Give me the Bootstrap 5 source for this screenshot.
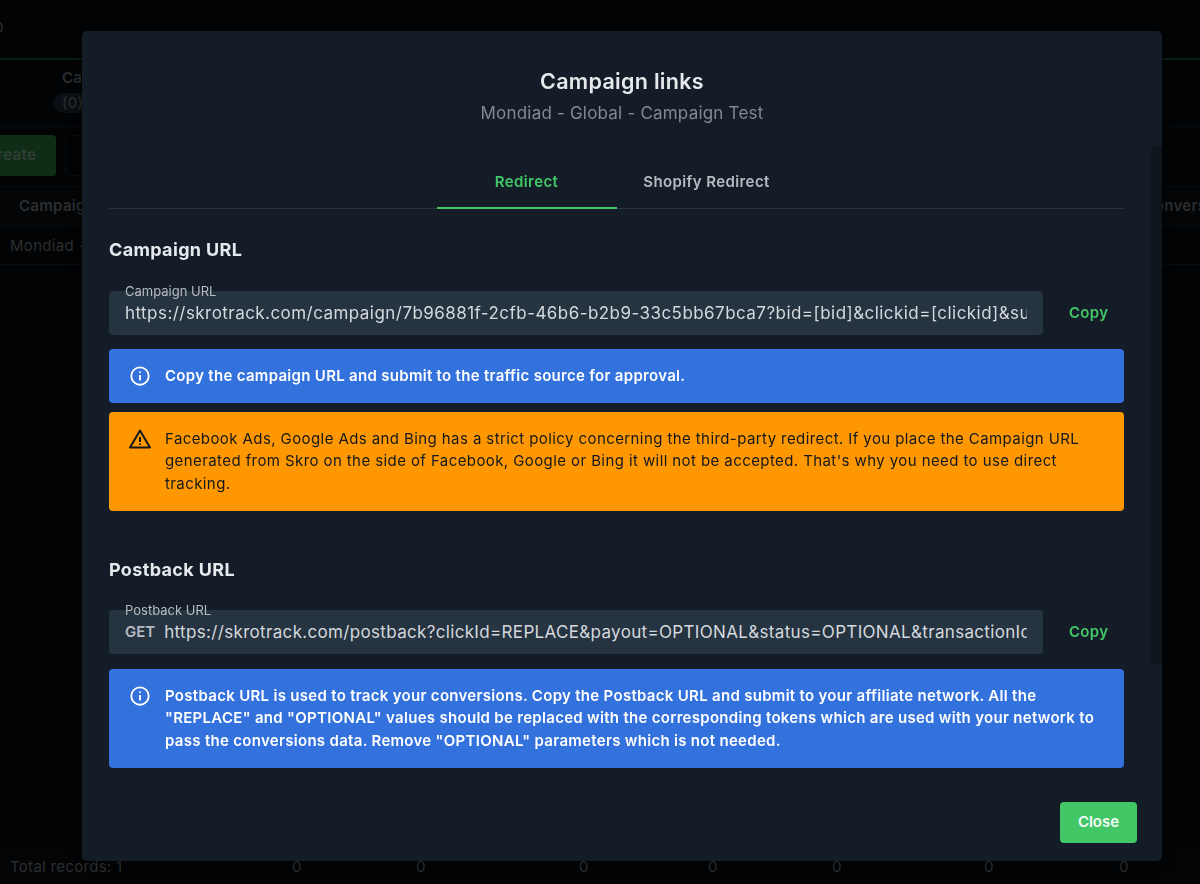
<!DOCTYPE html>
<html lang="en">
<head>
<meta charset="utf-8">
<title>Campaign links</title>
<link rel="stylesheet" href="https://cdn.jsdelivr.net/npm/bootstrap@5.3.0/dist/css/bootstrap.min.css">
<style>
html,body{height:884px;overflow:hidden;background:#020304}
body{font-family:"Inter","Noto Sans",sans-serif;color:#e5e9ec;font-size:15px;letter-spacing:.3px}
.bg-page{height:884px;width:1200px;color:#2c2f31;overflow:hidden;display:flex;flex-direction:column;background:#020304}
.bg-top{height:60px;border-bottom:2px solid #07200d;padding:17px 0 0;margin-left:-6px;font-size:15px}
.bg-tabs{height:67px;padding:7px 0 0 53px;border-bottom:1px solid #080b0e;font-size:15px;font-weight:600}
.bg-tabs .tab-name{padding-left:9px;white-space:nowrap}
.bg-pill{display:inline-block;background:#0a0f13;border-radius:10px;padding:0 9px;font-weight:400;width:60px;line-height:20px;margin-top:3px}
.bg-tools{height:60px;padding-top:8px;display:flex;gap:9px;border-bottom:1px solid #080b0e}
.bg-create{width:90px;margin-left:-34px;height:41px;background:#0f2c17;border-radius:4px;color:#303f34;font-weight:600;text-align:center;padding:9px 0 0;white-space:nowrap}
.bg-ghost{width:80px;height:41px;border:1px solid #090c0e;border-radius:4px}
.bg-head{height:39px;display:flex;justify-content:space-between;align-items:center;padding:0 0 0 19px;font-weight:600;background:#040506;border-bottom:1px solid #080b0e;white-space:nowrap}
.bg-head .conv{margin-right:-38px}
.bg-row{height:39px;padding:9px 0 0 10px;border-bottom:1px solid #080b0e}
.bg-fill{flex:1}
.bg-foot{height:38px;display:flex;align-items:center;position:relative;padding:4px 0 0 10px;background:#030405}
.bg-foot span.zero{position:absolute;top:10px}
.backdrop-pane{position:fixed;inset:0;z-index:1050;overflow:hidden}
.links-dialog{position:absolute;left:82px;top:31px;width:1080px;height:830px;background:#141d27;border-radius:5px;box-shadow:0 0 12px rgba(0,0,0,.5)}
.rail{position:absolute;right:0;top:114px;width:11px;height:520px;background:#0e161c;border-radius:6px}
.links-body{padding:36px 38px 0 27px;height:100%;display:flex;flex-direction:column}
.links-title{font-size:21.5px;font-weight:600;text-align:center;color:#e5e9ec;line-height:28px;margin:0 -11px 0 0;letter-spacing:.3px}
.links-sub{font-size:17px;text-align:center;color:#808a95;line-height:24px;margin:6px -11px 0 0;letter-spacing:.2px}
.links-tabs{display:flex;justify-content:center;border-bottom:1px solid #2a343d;margin-top:34px;height:50px;margin-bottom:0;list-style:none;padding:0}
.links-tabs li{width:180px;text-align:center;font-size:15px;font-weight:600;color:#b6bcc1;padding-top:12px;letter-spacing:.4px}
.links-tabs li.on{color:#42c767;border-bottom:2px solid #42c767;height:50px}
.links-h{font-size:18px;font-weight:700;color:#e5e9ec;line-height:24px;margin:29px 0 0;letter-spacing:.35px}
.links-h2{margin-top:47px}
.url-row{display:flex;align-items:center;margin-top:29px}
.url-row-tight{margin-top:28px}
.url-box{position:relative;width:934px;height:44px;background:#263341;border-radius:4px;padding:12px 16px 0;font-size:17px;line-height:20px;color:#d4d9dd;white-space:nowrap;display:flex;flex-shrink:0;letter-spacing:.45px}
.url-clip{overflow:hidden;flex:1;min-width:0}
.url-wide{letter-spacing:.33px}
.url-float{position:absolute;left:16px;top:-8px;font-size:13px;line-height:16px;color:#b6bcc1;z-index:2;letter-spacing:0}
.get{font-weight:600;font-size:15px;color:#b6bcc1;margin-right:9px;letter-spacing:0}
.url-copy{margin-left:26px;color:#42c767;font-weight:600;font-size:15px}
.note{display:flex;border-radius:4px;padding:15.75px 20px;font-size:15px;line-height:22.5px;gap:14px;letter-spacing:.41px}
.note svg{flex-shrink:0}
.note-blue{background:#3371dc;color:#fff;font-weight:600;margin-top:14px;letter-spacing:.3px}
.note-gap{margin-top:15px}
.note-warn{background:#ff9800;color:#14181c;margin-top:9px}
.note-warn svg{margin:-1px -1px 0}
.close-wrap{position:absolute;right:25px;bottom:18px}
.btn-closer{background:#42c767;border:0;color:#f4fbf6;font-weight:600;font-size:15px;width:77px;height:41px;border-radius:4px;padding:0}
</style>
</head>
<body>
<div class="bg-page">
  <div class="bg-top">0</div>
  <div class="bg-tabs"><div class="tab-name">Campaigns</div><span class="bg-pill">(0)</span></div>
  <div class="bg-tools"><div class="bg-create">Create</div><div class="bg-ghost"></div></div>
  <div class="bg-head"><span>Campaign name</span><span class="conv">Conversions</span></div>
  <div class="bg-row">Mondiad - Global - Campaign Test</div>
  <div class="bg-fill"></div>
  <div class="bg-foot">Total records: 1
    <span class="zero" style="left:292px">0</span><span class="zero" style="left:416px">0</span><span class="zero" style="left:579px">0</span><span class="zero" style="left:708px">0</span><span class="zero" style="left:832px">0</span><span class="zero" style="left:984px">0</span><span class="zero" style="left:1119px">0</span>
  </div>
</div>
<div class="backdrop-pane">
  <div class="links-dialog">
    <div class="rail"></div>
    <div class="links-body">
      <h5 class="links-title">Campaign links</h5>
      <p class="links-sub">Mondiad - Global - Campaign Test</p>
      <ul class="links-tabs">
        <li class="on">Redirect</li>
        <li>Shopify Redirect</li>
      </ul>
      <h6 class="links-h">Campaign URL</h6>
      <div class="url-row">
        <div class="url-box"><span class="url-float">Campaign URL</span><div class="url-clip">https://skrotrack.com/campaign/7b96881f-2cfb-46b6-b2b9-33c5bb67bca7?bid=[bid]&amp;clickid=[clickid]&amp;sub1=[sub1]&amp;sub2=[sub2]</div></div>
        <div class="url-copy">Copy</div>
      </div>
      <div class="note note-blue align-items-center">
        <svg width="22" height="22" viewBox="0 0 24 24" fill="none" stroke="#fff" stroke-width="2"><circle cx="12" cy="12" r="9.5"/><path d="M12 11v6M12 7v1.6"/></svg>
        <div>Copy the campaign URL and submit to the traffic source for approval.</div>
      </div>
      <div class="note note-warn">
        <svg width="24" height="24" viewBox="0 0 24 24" fill="none" stroke="#14181c" stroke-width="2" stroke-linejoin="round"><path d="M12 3.5 22 20.5H2Z"/><path d="M12 10v5M12 16.5v1.6"/></svg>
        <div>Facebook Ads, Google Ads and Bing has a strict policy concerning the third-party redirect. If you place the Campaign URL generated from Skro on the side of Facebook, Google or Bing it will not be accepted. That's why you need to use direct tracking.</div>
      </div>
      <h6 class="links-h links-h2">Postback URL</h6>
      <div class="url-row url-row-tight">
        <div class="url-box"><span class="url-float">Postback URL</span><span class="get">GET</span><div class="url-clip url-wide">https://skrotrack.com/postback?clickId=REPLACE&amp;payout=OPTIONAL&amp;status=OPTIONAL&amp;transactionId=OPTIONAL</div></div>
        <div class="url-copy">Copy</div>
      </div>
      <div class="note note-blue note-gap">
        <svg width="22" height="22" viewBox="0 0 24 24" fill="none" stroke="#fff" stroke-width="2"><circle cx="12" cy="12" r="9.5"/><path d="M12 11v6M12 7v1.6"/></svg>
        <div>Postback URL is used to track your conversions. Copy the Postback URL and submit to your affiliate network. All the "REPLACE" and "OPTIONAL" values should be replaced with the corresponding tokens which are used with your network to pass the conversions data. Remove "OPTIONAL" parameters which is not needed.</div>
      </div>
    </div>
    <div class="close-wrap"><button type="button" class="btn btn-closer">Close</button></div>
  </div>
</div>
</body>
</html>
